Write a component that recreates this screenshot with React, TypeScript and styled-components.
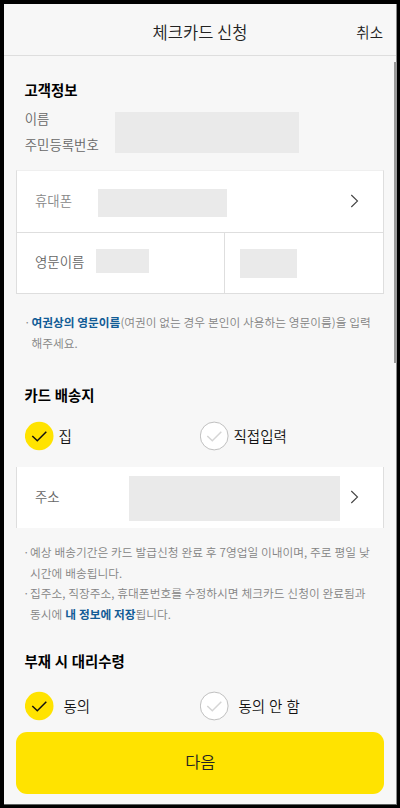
import React from "react";
import styled, { createGlobalStyle } from "styled-components";

const GlobalStyle = createGlobalStyle`
  * { box-sizing: border-box; }
  body {
    margin: 0;
    background: #000;
    font-family: "Noto Sans CJK KR", "Noto Sans", sans-serif;
  }
`;

const Frame = styled.div`
  width: 400px;
  height: 808px;
  padding: 4px 3px 3px 4px;
  background: #000;
  overflow: hidden;
`;

const Screen = styled.main`
  position: relative;
  display: flex;
  flex-direction: column;
  height: 801px;
  background: #f7f7f7;
  border-right: 1px solid #8a8a8a;
  border-bottom: 1px solid #5d6260;
`;

const Header = styled.header`
  display: grid;
  grid-template-columns: 1fr auto 1fr;
  align-items: center;
  height: 52px;
  padding: 4px 13px 0 13px;
  border-bottom: 1px solid #dedede;
`;

const Title = styled.h1`
  grid-column: 2;
  margin: 0;
  font-size: 16.5px;
  font-weight: 350;
  line-height: 24px;
  color: #222;
`;

const Cancel = styled.button`
  justify-self: end;
  padding: 0;
  border: 0;
  background: none;
  font: 350 14.5px/24px "Noto Sans CJK KR", sans-serif;
  color: #222;
`;

const Heading = styled.h2<{ $top: number }>`
  margin: ${(p) => p.$top}px 0 0 20.6px;
  font-size: 14.4px;
  font-weight: 700;
  line-height: 22px;
  word-spacing: 0.5px;
  color: #000;
`;

const Identity = styled.section`
  display: flex;
  height: 58px;
  margin-top: 5px;
  padding-left: 20px;
`;

const IdentityLabels = styled.div`
  width: 91px;
  margin-top: -1px;
  padding-left: 0.8px;
`;

const Label = styled.div<{ $tone?: string; $width?: number; $lift?: number }>`
  flex: none;
  width: ${(p) => (p.$width ? `${p.$width}px` : "auto")};
  margin-top: ${(p) => -(p.$lift ?? 0)}px;
  font-size: 13.4px;
  font-weight: 350;
  line-height: 26px;
  white-space: nowrap;
  color: ${(p) => p.$tone ?? "#666"};
`;

const Mask = styled.div<{ $w: number; $h: number; $top?: number }>`
  flex: none;
  width: ${(p) => p.$w}px;
  height: ${(p) => p.$h}px;
  margin-top: ${(p) => p.$top ?? 0}px;
  background: #eaeaea;
`;

const Card = styled.section<{ $top: number; $open?: boolean }>`
  width: 368px;
  margin: ${(p) => p.$top}px 0 0 12px;
  background: #fff;
  border: solid #dedede;
  border-width: ${(p) => (p.$open ? "0 1px" : "1px")};
  border-top-color: #efefef;
`;

const Row = styled.div<{ $divided?: boolean }>`
  display: flex;
  align-items: center;
  height: ${(p) => (p.$divided ? 62 : 61)}px;
  padding: 0 24px 0 18px;
  border-bottom: ${(p) => (p.$divided ? "1px solid #dedede" : "0")};
`;

const NameRow = styled.div`
  display: grid;
  grid-template-columns: 208px 1fr;
  height: 60px;
`;

const NameCell = styled.div<{ $second?: boolean }>`
  display: flex;
  padding: ${(p) => (p.$second ? "16px 0 0 15px" : "16px 0 0 18px")};
  border-right: ${(p) => (p.$second ? "0" : "1px solid #dedede")};
`;

const ArrowSvg = styled.svg`
  flex: none;
  margin: -1px 0 0 auto;
`;

const Notes = styled.ul<{ $top: number; $left: number; $indent: number; $spacing: number }>`
  margin: ${(p) => p.$top}px 0 0 ${(p) => p.$left}px;
  padding: 0;
  list-style: none;
  font-size: 11.7px;
  font-weight: 350;
  line-height: 20.5px;
  word-spacing: ${(p) => p.$spacing}px;
  color: #848484;
  white-space: nowrap;

  li {
    display: grid;
    grid-template-columns: ${(p) => p.$indent}px auto;
  }
`;

const Strong = styled.strong`
  font-weight: 700;
  color: #125c96;
`;

const Choices = styled.div<{ $top: number }>`
  display: grid;
  grid-template-columns: 175px auto;
  height: 30px;
  margin: ${(p) => p.$top}px 0 0 20.5px;
`;

const Choice = styled.div<{ $gap: number }>`
  display: flex;
  align-items: center;
  gap: ${(p) => p.$gap}px;
  font-size: 14.5px;
  font-weight: 350;
  line-height: 28px;
  word-spacing: 0.7px;
  color: #111;
  white-space: nowrap;
`;

const ChoiceText = styled.span`
  margin-top: -1px;
`;

const NextButton = styled.button`
  width: 368px;
  height: 61.5px;
  margin: 11px 0 0 12.3px;
  padding: 0 0 3px;
  border: 0;
  border-radius: 11px;
  background: #ffe300;
  font: 350 16.4px/58px "Noto Sans CJK KR", sans-serif;
  color: #222;
`;

const ScrollThumb = styled.div`
  position: absolute;
  top: 58px;
  right: -1px;
  width: 3px;
  height: 301px;
  background: #999;
`;

const Arrow = () => (
  <ArrowSvg width="9" height="14" viewBox="0 0 9 14" fill="none" stroke="#444" strokeWidth="1.1">
    <path d="M1.3 1L7.5 7L1.3 13" />
  </ArrowSvg>
);

const Check = ({ on }: { on?: boolean }) => (
  <svg width="29" height="30" viewBox="0 0 29 30" fill="none">
    <circle
      cx="14.2"
      cy="15"
      r={on ? 14.3 : 13.9}
      fill={on ? "#ffe300" : "#fff"}
      stroke={on ? "none" : "#b0b0b0"}
      strokeWidth="0.8"
    />
    <path d="M7.3 15L12.3 19.8L21.3 10.7" stroke={on ? "#111" : "#d5d5d5"} strokeWidth="1.5" />
  </svg>
);

export default function App() {
  return (
    <Frame>
      <GlobalStyle />
      <Screen>
        <Header>
          <Title>체크카드 신청</Title>
          <Cancel>취소</Cancel>
        </Header>

        <Heading $top={23}>고객정보</Heading>
        <Identity>
          <IdentityLabels>
            <Label>이름</Label>
            <Label>주민등록번호</Label>
          </IdentityLabels>
          <Mask $w={184} $h={41} $top={6} />
        </Identity>

        <Card $top={6}>
          <Row $divided>
            <Label $width={63} $tone="#888" $lift={3}>휴대폰</Label>
            <Mask $w={129} $h={28} $top={3} />
            <Arrow />
          </Row>
          <NameRow>
            <NameCell>
              <Label $width={61} $lift={1}>영문이름</Label>
              <Mask $w={53} $h={24} />
            </NameCell>
            <NameCell $second>
              <Mask $w={57} $h={29} />
            </NameCell>
          </NameRow>
        </Card>

        <Notes $top={18} $left={20} $indent={7.5} $spacing={0.2}>
          <li>
            <span>·</span>
            <span>
              <Strong>여권상의 영문이름</Strong>(여권이 없는 경우 본인이 사용하는 영문이름)을 입력
              <br />
              해주세요.
            </span>
          </li>
        </Notes>

        <Heading $top={31}>카드 배송지</Heading>
        <Choices $top={15}>
          <Choice $gap={5}>
            <Check on />
            <ChoiceText>집</ChoiceText>
          </Choice>
          <Choice $gap={5}>
            <Check />
            <ChoiceText>직접입력</ChoiceText>
          </Choice>
        </Choices>

        <Card $top={16} $open>
          <Row>
            <Label $width={94} $lift={3}>주소</Label>
            <Mask $w={211.4} $h={45} $top={2} />
            <Arrow />
          </Row>
        </Card>

        <Notes $top={14} $left={19} $indent={7} $spacing={0.3}>
          <li>
            <span>·</span>
            <span>
              예상 배송기간은 카드 발급신청 완료 후 7영업일 이내이며, 주로 평일 낮
              <br />
              시간에 배송됩니다.
            </span>
          </li>
          <li>
            <span>·</span>
            <span>
              집주소, 직장주소, 휴대폰번호를 수정하시면 체크카드 신청이 완료됨과
              <br />
              동시에 <Strong>내 정보에 저장</Strong>됩니다.
            </span>
          </li>
        </Notes>

        <Heading $top={26}>부재 시 대리수령</Heading>
        <Choices $top={19}>
          <Choice $gap={10}>
            <Check on />
            <ChoiceText>동의</ChoiceText>
          </Choice>
          <Choice $gap={10}>
            <Check />
            <ChoiceText>동의 안 함</ChoiceText>
          </Choice>
        </Choices>

        <NextButton>다음</NextButton>
        <ScrollThumb />
      </Screen>
    </Frame>
  );
}
